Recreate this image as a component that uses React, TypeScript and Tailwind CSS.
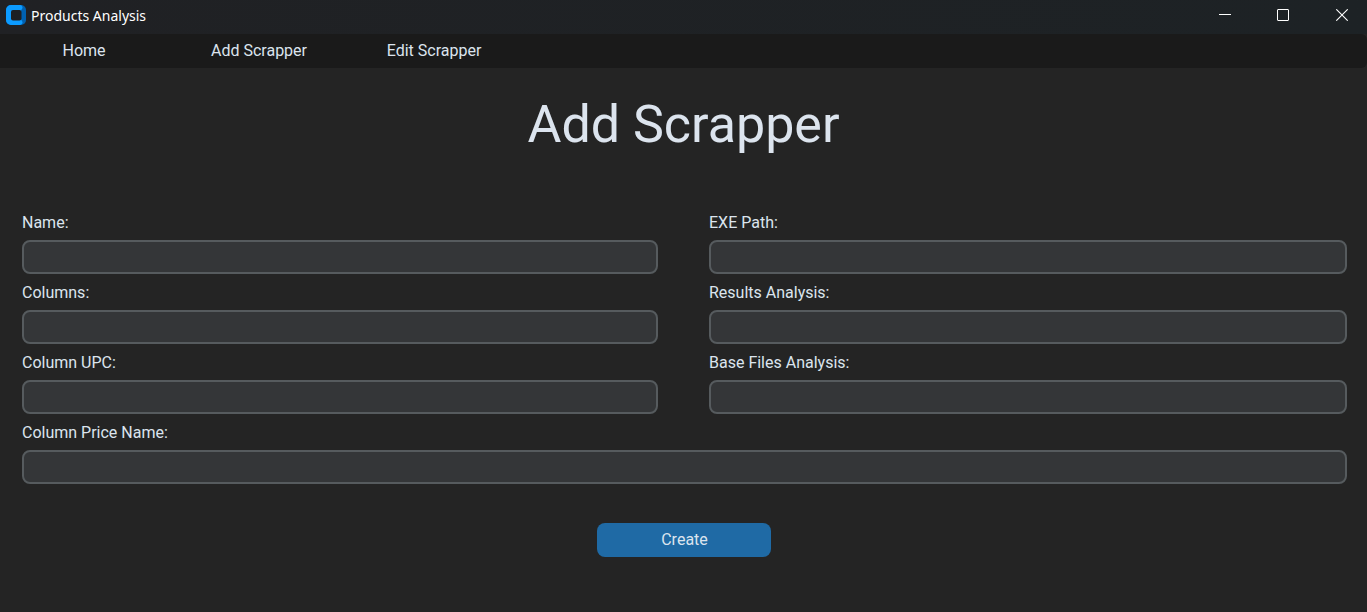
import React from "react";

const navItems = ["Home", "Add Scrapper", "Edit Scrapper"];

const fields = [
  { id: "name", label: "Name:" },
  { id: "exe-path", label: "EXE Path:" },
  { id: "columns", label: "Columns:" },
  { id: "results-analysis", label: "Results Analysis:" },
  { id: "column-upc", label: "Column UPC:" },
  { id: "base-files-analysis", label: "Base Files Analysis:" },
  { id: "column-price-name", label: "Column Price Name:", wide: true },
];

function AppLogo() {
  return (
    <svg width="20" height="20" viewBox="0 0 20 20" aria-hidden="true">
      <rect width="20" height="20" rx="5" fill="#0061b0" />
      <path
        d="M5 0H14A2.5 2.5 0 0 1 16 4L15 5.5V14.5L16 16A2.5 2.5 0 0 1 14 20H5A5 5 0 0 1 0 15V5A5 5 0 0 1 5 0Z"
        fill="#0c9bff"
      />
      <rect x="5" y="5" width="10.5" height="10.5" rx="2" fill="#1d2023" />
    </svg>
  );
}

function TitleBar() {
  return (
    <header className="flex h-[34px] items-start justify-between bg-linear-to-r from-[#202124] to-[#1d2225]">
      <div className="flex h-[30px] items-center gap-[5px] pl-[6px]">
        <AppLogo />
        <span className="pt-px font-['Noto_Sans',sans-serif] text-sm text-white">Products Analysis</span>
      </div>
      <div className="flex h-[30px] text-white">
        <button type="button" aria-label="Minimize" className="flex w-[58px] items-center justify-center">
          <svg width="12" height="12" viewBox="0 0 12 12" stroke="currentColor">
            <path d="M0 5.5H12" />
          </svg>
        </button>
        <button type="button" aria-label="Maximize" className="flex w-[58px] items-center justify-center">
          <svg width="12" height="12" viewBox="0 0 12 12" fill="none" stroke="currentColor">
            <rect x="0.5" y="0.5" width="11" height="11" rx="0.5" />
          </svg>
        </button>
        <button type="button" aria-label="Close" className="flex w-[55px] items-center justify-center pl-[5px]">
          <svg width="12" height="12" viewBox="0 0 12 12" stroke="currentColor" strokeWidth="1.1">
            <path d="M0.3 0.3L11.7 11.7M11.7 0.3L0.3 11.7" />
          </svg>
        </button>
      </div>
    </header>
  );
}

export default function App() {
  return (
    <div className="flex min-h-screen flex-col bg-[#242424] font-[Roboto,sans-serif] text-base text-[#dce4ee]">
      <TitleBar />
      <nav className="flex h-[34px] gap-[7px] rounded-r-md bg-[#1a1a1a]">
        {navItems.map((item) => (
          <button key={item} type="button" className="w-[168px] text-center">
            {item}
          </button>
        ))}
      </nav>
      <main className="flex flex-col">
        <h1 className="pt-[27px] text-center text-[52px] leading-[60px]">Add Scrapper</h1>
        <form className="flex flex-col pt-[55px]" onSubmit={(e) => e.preventDefault()}>
          <div className="grid grid-cols-[636fr_638fr] gap-x-[51px] pr-5 pl-[22px]">
            {fields.map((field) => (
              <div key={field.id} className={field.wide ? "col-span-2" : ""}>
                <label htmlFor={field.id} className="block h-[30px] pt-px leading-6">
                  {field.label}
                </label>
                <input
                  id={field.id}
                  type="text"
                  className="mb-[6px] block h-[34px] w-full rounded-lg border-2 border-[#565b5e] bg-[#343638] px-2 outline-none"
                />
              </div>
            ))}
          </div>
          <button
            type="submit"
            className="mt-[33px] h-[34px] w-[174px] self-center rounded-lg bg-[#1f6aa5] pb-px pl-[2px] text-center"
          >
            Create
          </button>
        </form>
      </main>
    </div>
  );
}
